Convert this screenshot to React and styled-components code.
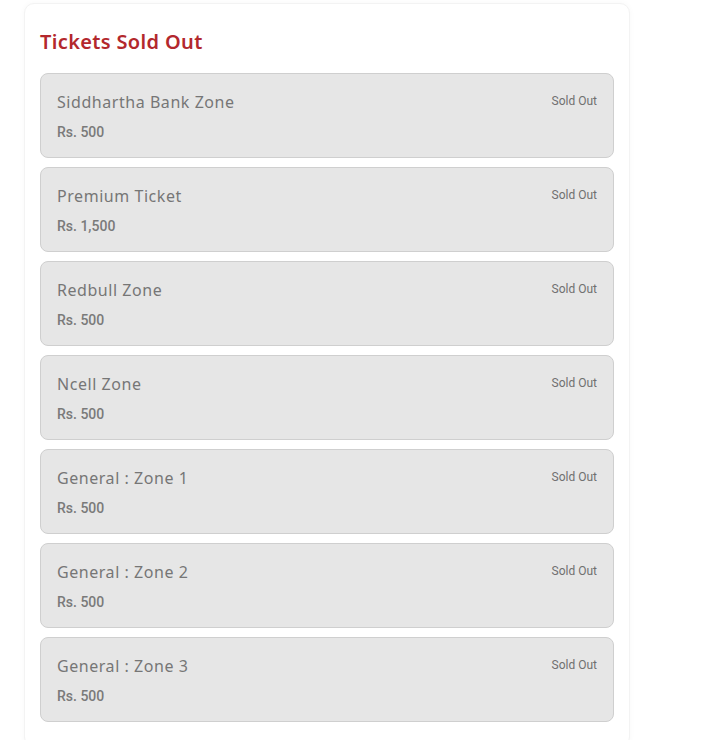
import React from "react";
import styled, { createGlobalStyle } from "styled-components";

const Global = createGlobalStyle`
  html, body { margin: 0; padding: 0; background: #ffffff; }
  body { font-family: "Noto Sans", Roboto, sans-serif; }
`;

const Page = styled.div`
  padding: 3px 0 0 24px;
  width: 606px;
`;

const Card = styled.section`
  background: #fff;
  border-radius: 10px;
  border: 1px solid #f3f3f3;
  box-shadow: 0 0 6px rgba(0, 0, 0, 0.03);
  padding: 23px 15px 24px;
  display: flex;
  flex-direction: column;
  gap: 9px;
`;

const Title = styled.h2`
  margin: 0 0 7px;
  font-family: "Noto Sans", sans-serif;
  font-weight: 600;
  font-size: 20px;
  line-height: 30px;
  color: #b3282d;
  letter-spacing: 0.35px;
`;

const Ticket = styled.div`
  background: #e6e6e6;
  border: 1px solid #cfcfcf;
  border-radius: 8px;
  padding: 16px 16px 15px;
  display: flex;
  justify-content: space-between;
  align-items: flex-start;
`;

const Info = styled.div`
  display: flex;
  flex-direction: column;
  gap: 8px;
`;

const Name = styled.div`
  font-family: "Noto Sans", sans-serif;
  font-size: 16px;
  line-height: 24px;
  color: #767676;
  letter-spacing: 0.55px;
`;

const Price = styled.div`
  font-family: Roboto, sans-serif;
  font-weight: 500;
  font-size: 14px;
  line-height: 20px;
  color: #7a7a7a;
`;

const Status = styled.div`
  margin-top: 2px;
  font-family: Roboto, sans-serif;
  font-size: 12px;
  line-height: 18px;
  color: #707070;
`;

const tickets = [
  ["Siddhartha Bank Zone", "Rs. 500"],
  ["Premium Ticket", "Rs. 1,500"],
  ["Redbull Zone", "Rs. 500"],
  ["Ncell Zone", "Rs. 500"],
  ["General : Zone 1", "Rs. 500"],
  ["General : Zone 2", "Rs. 500"],
  ["General : Zone 3", "Rs. 500"],
];

export default function App() {
  return (
    <>
      <Global />
      <Page>
        <Card>
          <Title>Tickets Sold Out</Title>
          {tickets.map(([name, price]) => (
            <Ticket key={name}>
              <Info>
                <Name>{name}</Name>
                <Price>{price}</Price>
              </Info>
              <Status>Sold Out</Status>
            </Ticket>
          ))}
        </Card>
      </Page>
    </>
  );
}
